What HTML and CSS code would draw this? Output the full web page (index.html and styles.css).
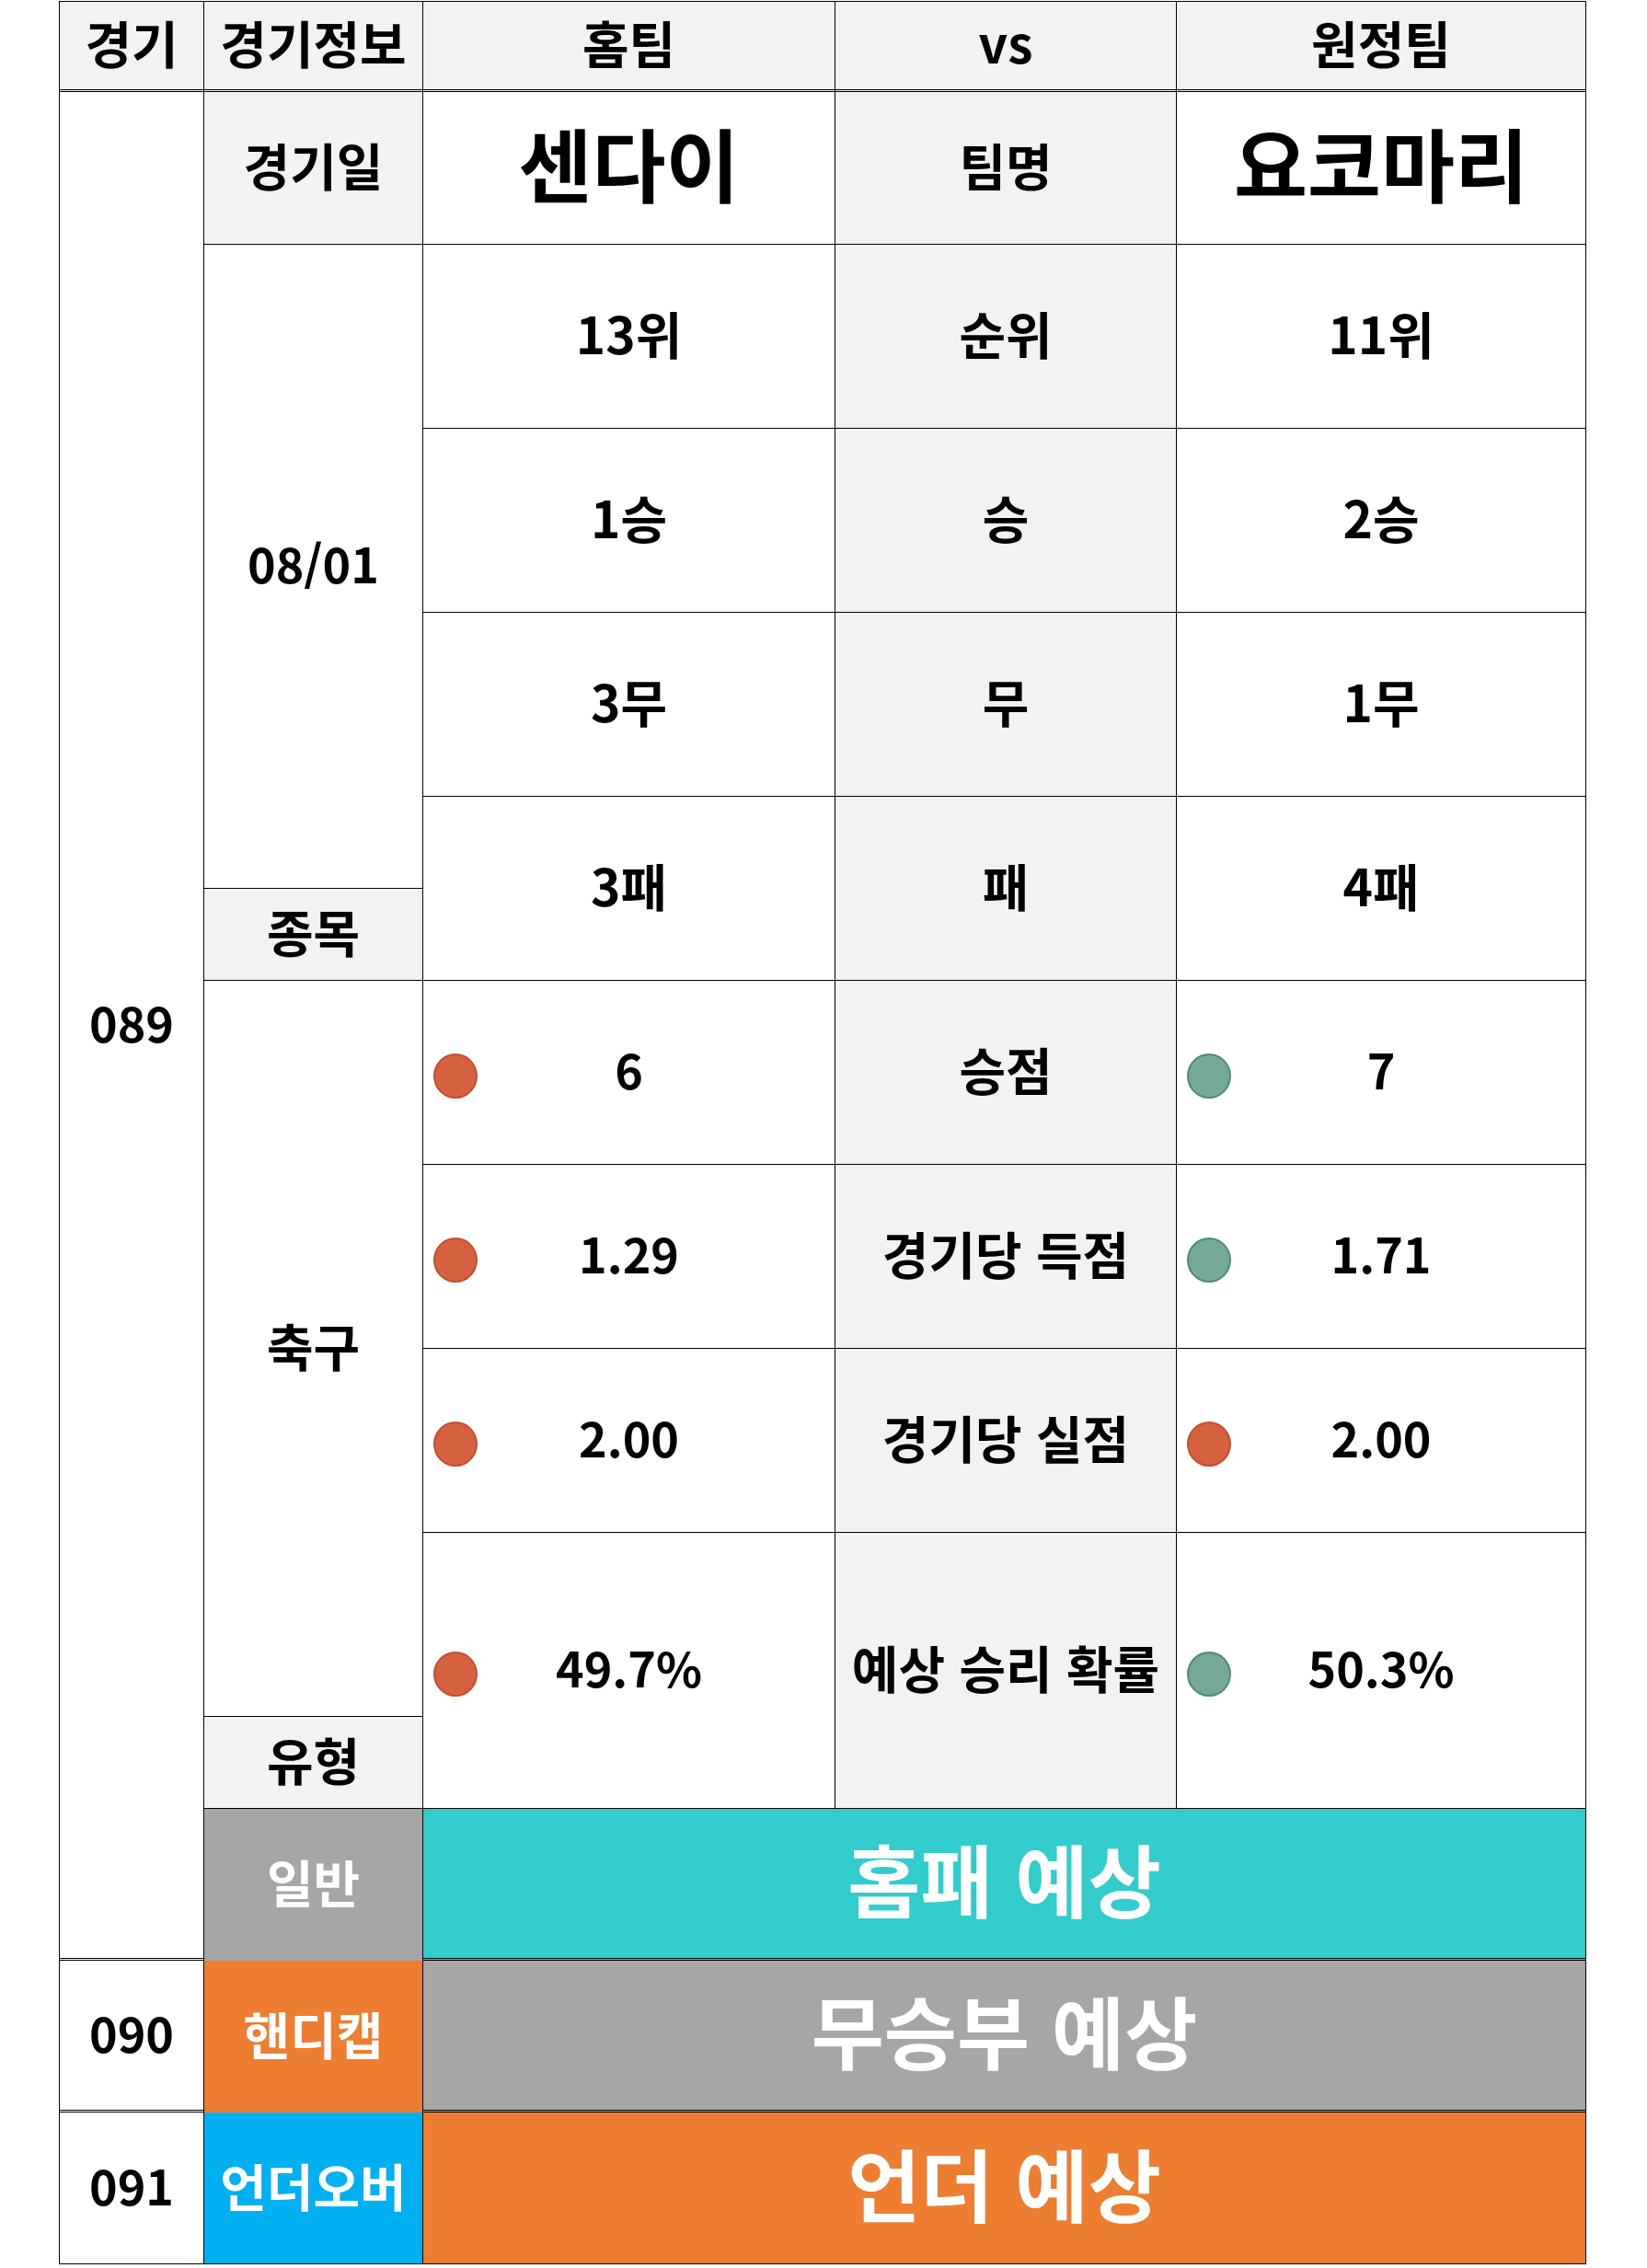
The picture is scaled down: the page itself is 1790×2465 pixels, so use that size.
FILE: index.html
```html
<!DOCTYPE html>
<html lang="ko">
<head>
<meta charset="utf-8">
<title>경기 분석</title>
<link rel="stylesheet" href="styles.css">
</head>
<body>
<div class="sheet">
  <div class="c head">경기</div>
  <div class="c head">경기정보</div>
  <div class="c head">홈팀</div>
  <div class="c head">vs</div>
  <div class="c head">원정팀</div>

  <div class="c game-main num">089</div>
  <div class="c label">경기일</div>
  <div class="c big">센다이</div>
  <div class="c label">팀명</div>
  <div class="c big">요코마리</div>

  <div class="c span4 num">08/01</div>
  <div class="c">13위</div>
  <div class="c label">순위</div>
  <div class="c">11위</div>

  <div class="c">1승</div>
  <div class="c label">승</div>
  <div class="c">2승</div>

  <div class="c">3무</div>
  <div class="c label">무</div>
  <div class="c">1무</div>

  <div class="c span2">3패</div>
  <div class="c label span2">패</div>
  <div class="c span2">4패</div>
  <div class="c label">종목</div>

  <div class="c span4">축구</div>
  <div class="c stat"><span class="dot red"></span><span class="num">6</span><span></span></div>
  <div class="c label">승점</div>
  <div class="c stat"><span class="dot green"></span><span class="num">7</span><span></span></div>

  <div class="c stat"><span class="dot red"></span><span class="num">1.29</span><span></span></div>
  <div class="c label">경기당 득점</div>
  <div class="c stat"><span class="dot green"></span><span class="num">1.71</span><span></span></div>

  <div class="c stat"><span class="dot red"></span><span class="num">2.00</span><span></span></div>
  <div class="c label">경기당 실점</div>
  <div class="c stat"><span class="dot red"></span><span class="num">2.00</span><span></span></div>

  <div class="c stat span2"><span class="dot red"></span><span class="num">49.7%</span><span></span></div>
  <div class="c label span2">예상 승리 확률</div>
  <div class="c stat span2"><span class="dot green"></span><span class="num">50.3%</span><span></span></div>
  <div class="c label">유형</div>

  <div class="c type type-gray">일반</div>
  <div class="c result res-teal sep">홈패 예상</div>

  <div class="c game sep num">090</div>
  <div class="c type type-orange">핸디캡</div>
  <div class="c result res-gray sep">무승부 예상</div>

  <div class="c game num">091</div>
  <div class="c type type-blue">언더오버</div>
  <div class="c result res-orange">언더 예상</div>
</div>
</body>
</html>
```

FILE: styles.css
```css
html, body {
  margin: 0;
  padding: 0;
  background: #ffffff;
}

.sheet {
  display: grid;
  grid-template-columns: 157px 238px 448px 371px 445px;
  grid-template-rows: 98px 166px 200px 200px 200px 100px 100px 200px 200px 200px 200px 100px 165px 165px 165px;
  width: max-content;
  margin: 1px 0 0 64px;
  border-top: 1px solid #000;
  border-left: 1px solid #000;
  font-family: "Noto Sans CJK KR", "Noto Sans", sans-serif;
  font-weight: 700;
  font-size: 55px;
  color: #000;
}

.c {
  box-sizing: border-box;
  border-right: 1px solid #000;
  border-bottom: 1px solid #000;
  display: flex;
  align-items: center;
  justify-content: center;
  padding-bottom: 0.13em;
  line-height: 1;
  white-space: nowrap;
  background: #ffffff;
}

.num {
  font-size: 52px;
}

.head {
  background: #f2f2f2;
  border-bottom: 3px double #000;
}

.label {
  background: #f2f2f2;
}

.big {
  font-size: 87px;
}

.game-main {
  grid-row: span 12;
  border-bottom: 3px double #000;
}

.span4 {
  grid-row: span 4;
}

.span2 {
  grid-row: span 2;
}

.stat {
  display: grid;
  grid-template-columns: 1fr auto 1fr;
  align-items: center;
}

.dot {
  justify-self: start;
  box-sizing: border-box;
  width: 48px;
  height: 49px;
  margin-left: 11px;
  margin-top: 16px;
  border-radius: 50%;
}

.dot.red {
  background: #d6613f;
  border: 2px solid #c24f31;
}

.dot.green {
  background: #76a897;
  border: 2px solid #4f8a76;
}

.type {
  color: #ffffff;
}

.type-gray {
  background: #a6a6a6;
  border-bottom-color: #a6a6a6;
}

.type-orange {
  background: #ed7d31;
  border-bottom-color: #ed7d31;
}

.type-blue {
  background: #00b0f0;
}

.result {
  grid-column: span 3;
  color: #ffffff;
  font-size: 86px;
}

.sep {
  border-bottom: 3px double #000;
}

.res-teal {
  background: #33cccc;
}

.res-gray {
  background: #a6a6a6;
}

.res-orange {
  background: #ed7d31;
}
```
